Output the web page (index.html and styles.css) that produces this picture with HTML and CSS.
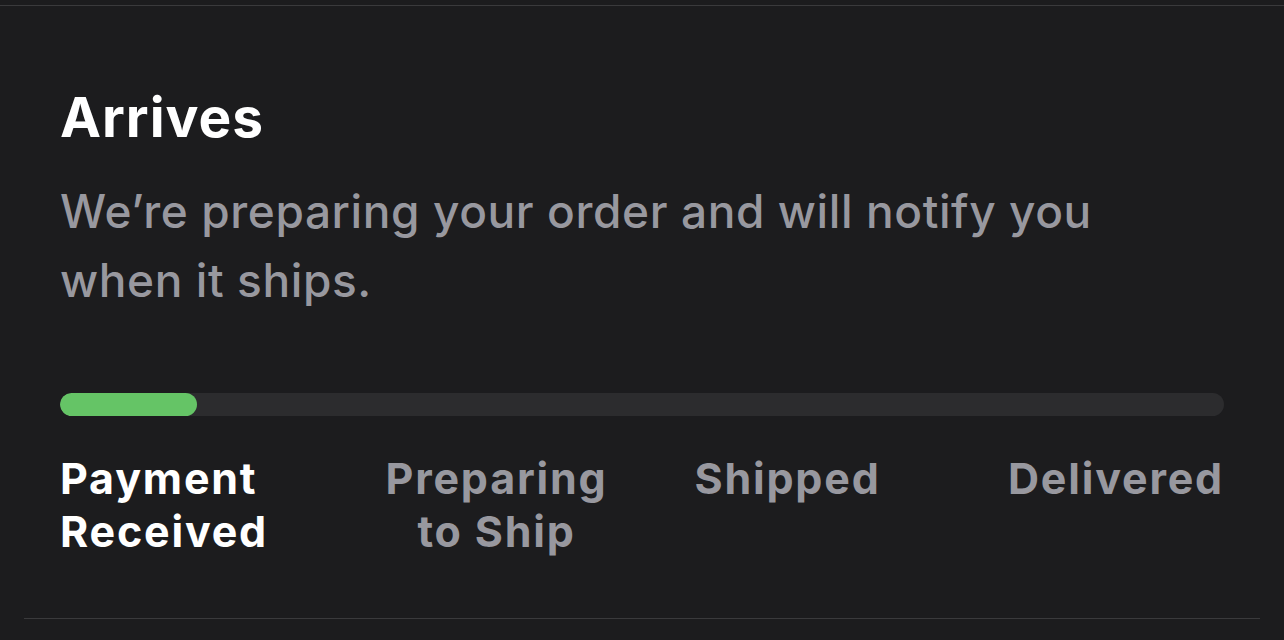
FILE: index.html
```html
<!DOCTYPE html>
<html lang="en">
<head>
<meta charset="utf-8">
<link rel="stylesheet" href="styles.css">
</head>
<body>
<div class="page">
  <div class="divider-top"></div>
  <section class="card">
    <h1 class="title">Arrives</h1>
    <p class="subtitle">We’re preparing your order and will notify you when it ships.</p>
    <div class="track"><div class="fill" style="width:137px"></div></div>
    <div class="steps">
      <div class="step step-first active">Payment<br>Received</div>
      <div class="step step-mid">Preparing<br>to Ship</div>
      <div class="step step-mid">Shipped</div>
      <div class="step step-last">Delivered</div>
    </div>
  </section>
  <div class="divider-bottom"></div>
</div>
</body>
</html>
```
FILE: styles.css
```css
html, body {
  margin: 0;
  padding: 0;
  background: #1c1c1e;
}
.page {
  width: 1284px;
  height: 640px;
  overflow: hidden;
  font-family: Inter, "Noto Sans", sans-serif;
}
.divider-top {
  margin-top: 5px;
  height: 1px;
  background: #3a3a3c;
}
.card {
  padding: 0 60px;
}
.title {
  margin: 0;
  padding-top: 78px;
  font-size: 55px;
  line-height: 66px;
  font-weight: 700;
  color: #ffffff;
  letter-spacing: 1px;
}
.subtitle {
  margin: 0;
  margin-top: 27px;
  width: 1100px;
  font-size: 46px;
  line-height: 69px;
  font-weight: 500;
  color: #98989f;
  letter-spacing: 0.6px;
}
.track {
  margin-top: 78px;
  height: 23px;
  border-radius: 12px;
  background: #2c2c2e;
  overflow: hidden;
}
.fill {
  height: 100%;
  border-radius: 12px;
  background: #65c466;
}
.steps {
  margin-top: 36px;
  display: grid;
  grid-template-columns: repeat(4, 1fr);
  font-size: 43px;
  line-height: 53px;
  font-weight: 700;
  color: #98989f;
  letter-spacing: 1.8px;
}
.step.active { color: #ffffff; }
.step-first { text-align: left; }
.step-mid { text-align: center; }
.step-last { text-align: right; }
.divider-bottom {
  margin: 60px 24px 0 24px;
  height: 1px;
  background: #3a3a3c;
}
```
